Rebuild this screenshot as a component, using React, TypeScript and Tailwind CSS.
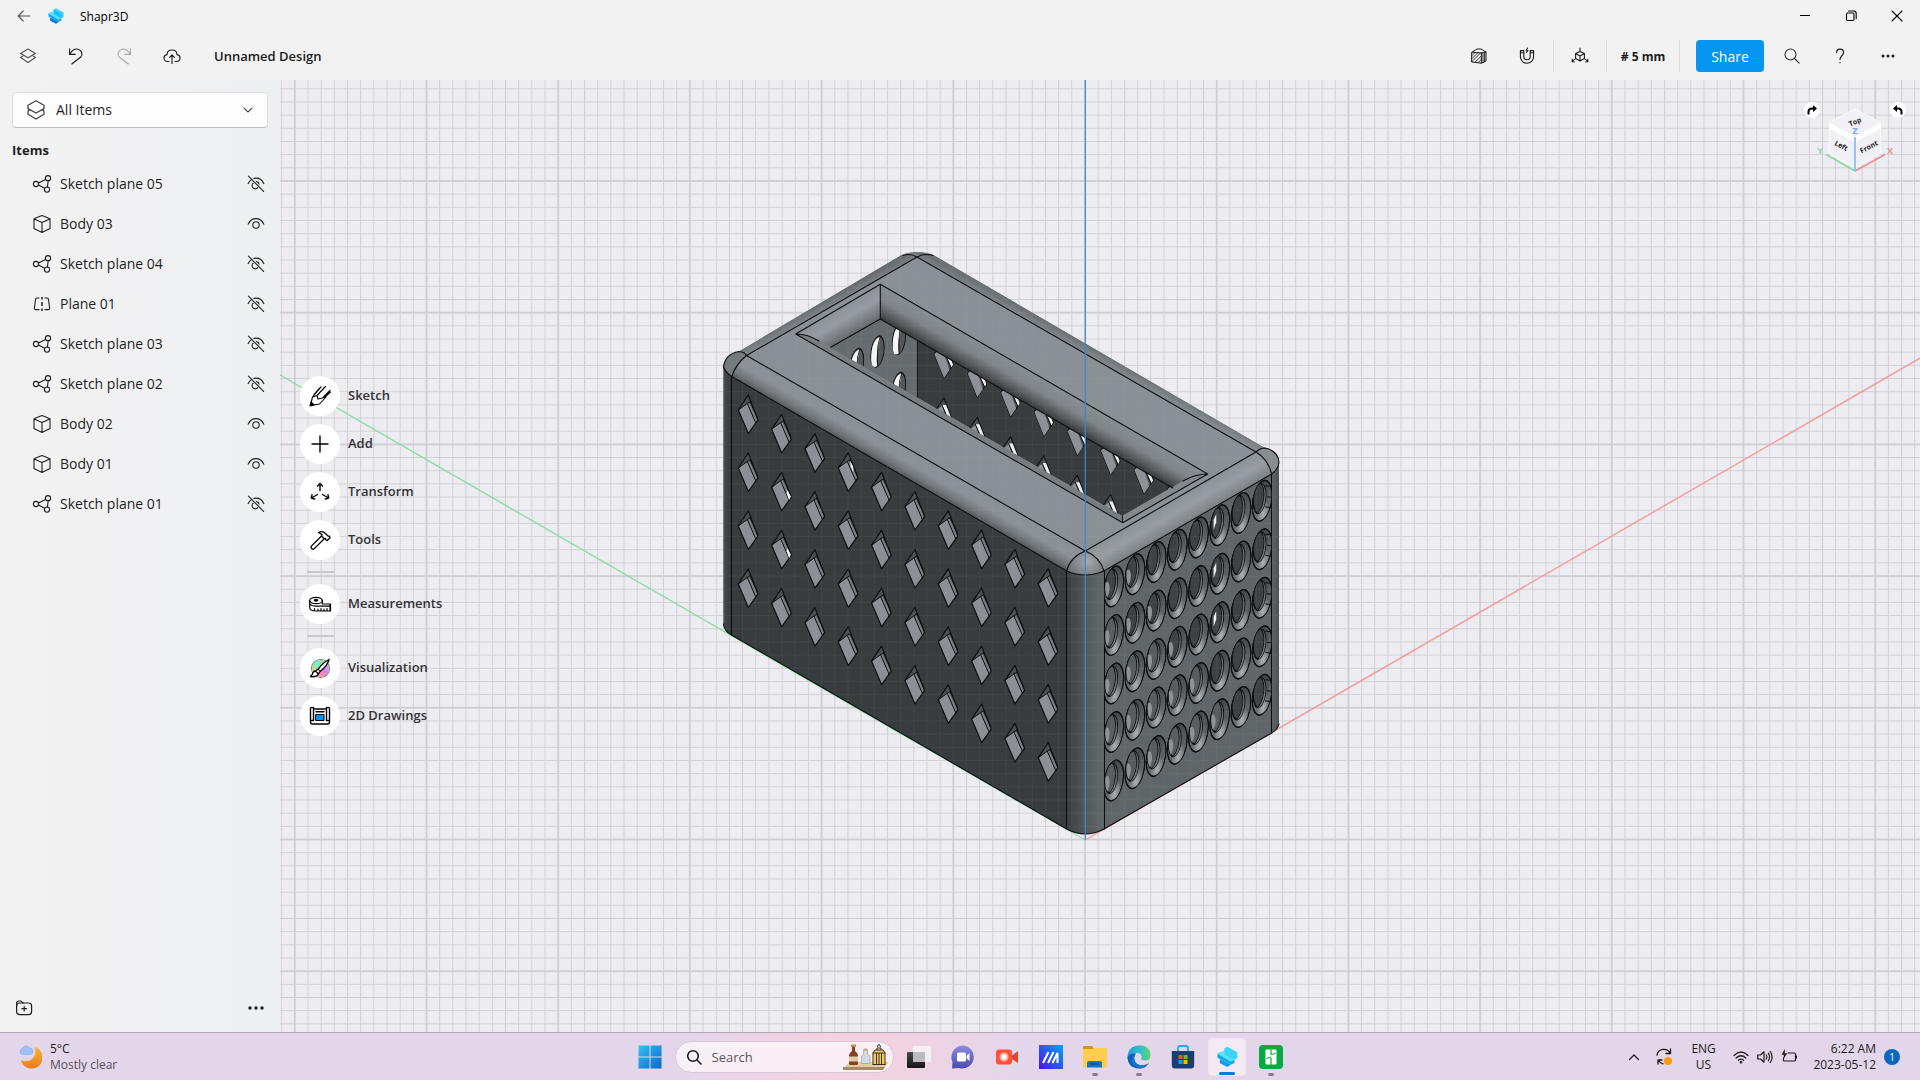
import type { ReactNode } from "react";

type IconProps = { size?: number; children: ReactNode; className?: string; sw?: number };

function Icon({ size = 20, children, className = "", sw = 1.1 }: IconProps) {
  return (
    <svg
      width={size}
      height={size}
      viewBox={`0 0 ${size} ${size}`}
      fill="none"
      stroke="currentColor"
      strokeWidth={sw}
      strokeLinecap="round"
      strokeLinejoin="round"
      className={`shrink-0 ${className}`}
      aria-hidden="true"
    >
      {children}
    </svg>
  );
}

function ShaprLogo({ size }: { size: number }) {
  return (
    <svg width={size} height={size} viewBox="0 0 16 16" aria-hidden="true">
      <path d="M5.6 1.6 8 .2l7.6 4.2v4.4l-2.2 1.4L5.6 6z" fill="#38d6ff" />
      <path d="M5.6 1.6 13.4 6v4.2L5.6 6z" fill="#1cc0fb" />
      <path d="M.4 5.6 3 4.2l10.4 6v2.4L10.6 14 .4 8.6z" fill="#12a9f4" />
      <path d="M3 4.2 5.6 3v3l7.8 4.2-2.8 1.6L.4 5.6z" fill="#5be4ff" />
      <path d="M2.2 9.6 10.6 14 8 15.800l-5.800-3z" fill="#0b74dd" />
    </svg>
  );
}

const SketchPlaneIcon = () => (
  <Icon>
    <circle cx="4" cy="10" r="2.6" />
    <circle cx="16" cy="4.2" r="2.6" />
    <circle cx="15" cy="15.6" r="2.6" />
    <path d="M6.5 9 13.6 5.4M6.5 11l6.1 3.2M16.2 6.8 15.4 13" />
  </Icon>
);

const BodyIcon = () => (
  <Icon>
    <path d="M10 1.6 18 4.8v9.8L10 18.4 2 14.6V4.8zM2.2 5 10 8.4 17.8 5M10 8.4v9.8" />
  </Icon>
);

const PlaneIcon = () => (
  <Icon>
    <path d="M7 4H5.2c-1 0-1.6.6-1.7 1.6L2.4 14c-.1 1 .4 1.6 1.2 1.6H7M13 4h1.800c1 0 1.600.6 1.700 1.600l1.100 8.400c.1 1-.4 1.600-1.200 1.600H13" />
    <path d="M10 3v2.500M10 8v4M10 14.500V17" strokeLinecap="butt" strokeWidth="1.500" />
  </Icon>
);

const EyeIcon = () => (
  <Icon size={18}>
    <path d="M1.200 9.200C2.800 5.600 5.600 3.600 9 3.600s6.200 2 7.800 5.600" />
    <circle cx="9" cy="10" r="3.200" />
  </Icon>
);

const EyeOffIcon = () => (
  <Icon size={18}>
    <path d="M1.200 8.600c.8-1.700 1.800-3 3.200-4M7 3.400c4.400-1 8 1.200 9.800 5.200M6.200 8.200a3.200 3.200 0 1 0 4.600 4.400M9.600 6.600a3.200 3.200 0 0 1 2.500 2.600M1.400 1.200l15.200 15.200" />
  </Icon>
);

const items = [
  { name: "Sketch plane 05", kind: "sketch", visible: false },
  { name: "Body 03", kind: "body", visible: true },
  { name: "Sketch plane 04", kind: "sketch", visible: false },
  { name: "Plane 01", kind: "plane", visible: false },
  { name: "Sketch plane 03", kind: "sketch", visible: false },
  { name: "Sketch plane 02", kind: "sketch", visible: false },
  { name: "Body 02", kind: "body", visible: true },
  { name: "Body 01", kind: "body", visible: true },
  { name: "Sketch plane 01", kind: "sketch", visible: false },
];

function ItemIcon({ kind }: { kind: string }) {
  if (kind === "sketch") return <SketchPlaneIcon />;
  if (kind === "body") return <BodyIcon />;
  return <PlaneIcon />;
}

function TitleBar() {
  return (
    <div className="flex h-8 items-center text-xs text-black">
      <button aria-label="Back" className="flex h-8 w-12 items-center justify-center text-[#555]">
        <Icon size={14}>
          <path d="M1.200 7h11.800M6.200 2 1.200 7l5 5" />
        </Icon>
      </button>
      <ShaprLogo size={16} />
      <span className="ml-4 grow pt-px">Shapr3D</span>
      <button aria-label="Minimize" className="flex h-8 w-[46px] items-center justify-center">
        <Icon size={10} sw={1}>
          <path d="M0 4.500h10" />
        </Icon>
      </button>
      <button aria-label="Restore" className="flex h-8 w-[46px] items-center justify-center">
        <Icon size={12} sw={1.100}>
          <rect x="1.500" y="3" width="7.500" height="7.500" rx="1.200" />
          <path d="M3.600 1h5c1.600 0 2.600 1 2.600 2.600v5" />
        </Icon>
      </button>
      <button aria-label="Close" className="flex h-8 w-[46px] items-center justify-center">
        <Icon size={12}>
          <path d="m1 1 10 10M11 1 1 11" />
        </Icon>
      </button>
    </div>
  );
}

function ToolButton({ label, children, className = "" }: { label: string; children: ReactNode; className?: string }) {
  return (
    <button aria-label={label} className={`flex h-12 w-12 items-center justify-center ${className}`}>
      {children}
    </button>
  );
}

const Divider = () => <div className="mx-0.5 h-8 w-px bg-[#dcdcdc]" />;

function Toolbar() {
  return (
    <div className="flex h-12 items-center pr-2 pl-1 text-[#1b1b1b]">
      <ToolButton label="Items">
        <Icon size={18} className="text-[#555]" sw={1.200}>
          <path d="M9 2 16.400 6.400 9 10.800 1.600 6.400zM3.600 9.200 1.600 10.600 9 15.400l7.400-4.800-2-1.400" />
        </Icon>
      </ToolButton>
      <ToolButton label="Undo">
        <Icon size={18}>
          <path d="M2.600 1.800v5.600h5.600M2.800 7.200C5 3.400 8 1.600 11 2.200c3.600.8 5.200 4.800 2.800 7.800L4.800 17" />
        </Icon>
      </ToolButton>
      <ToolButton label="Redo" className="text-[#a8a8a8]">
        <Icon size={18}>
          <path d="M15.400 1.800v5.600H9.800M15.200 7.200C13 3.400 10 1.600 7 2.200 3.400 3 1.800 7 4.200 10l9 7" />
        </Icon>
      </ToolButton>
      <ToolButton label="Upload">
        <Icon size={18}>
          <path d="M6 14.500H4.600C2.600 14.500 1 13 1 11c0-1.800 1.200-3.200 3-3.400C4.200 4.800 6.400 3 9 3s4.800 1.800 5 4.600c1.800.2 3 1.600 3 3.400 0 2-1.600 3.500-3.600 3.500H12M9 16.500V8.200M6.600 10.400 9 8l2.400 2.400" />
        </Icon>
      </ToolButton>
      <h1 className="ml-[18px] grow pt-0.5 text-[13px] font-semibold">Unnamed Design</h1>
      <ToolButton label="Section view">
        <Icon size={18} sw={1}>
          <path d="M2 5.200 7 2h4l5 3v9l-4.600 2.200L2 15zM2 5.200l9.400.8v10.200M11.400 6 16 5" />
          <path
            d="M2 8.500 5 5.500M2 11.500l6-6M2 14.500l9-9M5 15.200l6.400-6.400M8 15.600l3.400-3.400M13 15.600V6M14.600 14.800V5.600"
            strokeWidth=".9"
          />
        </Icon>
      </ToolButton>
      <ToolButton label="Snapping">
        <Icon size={18}>
          <path d="M2.400 3.600h3.400v6a3.200 3.200 0 0 0 6.400 0v-6h3.400v6a6.600 6.600 0 0 1-13.200 0zM2.400 5.800h3.400M12.200 5.800h3.400M9.600 1 8 3.200h2L8.400 5.400" />
        </Icon>
      </ToolButton>
      <Divider />
      <ToolButton label="Orientation">
        <Icon size={18}>
          <path d="M9 4.400 13.400 6.600v5L9 14l-4.400-2.400v-5zM4.600 6.600 9 9l4.400-2.400M9 9v5M9 4.400V1M4.600 11.600 2 13.600M13.400 11.600l2.600 2M1.200 12.400v2.200l2 .4M16.800 12.400v2.200l-2 .4" />
        </Icon>
      </ToolButton>
      <Divider />
      <button className="w-[68px] pt-0.5 text-xs font-bold">#&nbsp;5&nbsp;mm</button>
      <Divider />
      <button className="mr-1 ml-[14px] h-8 w-[68px] rounded bg-[#0594f0] pt-0.5 text-sm text-white">Share</button>
      <ToolButton label="Search">
        <Icon size={18} className="text-[#333]">
          <circle cx="7.500" cy="7.500" r="5.500" />
          <path d="m11.500 11.500 4.700 4.700" />
        </Icon>
      </ToolButton>
      <ToolButton label="Help">
        <Icon size={18} sw={1.200}>
          <path d="M5.600 5.600C5.600 3.400 7 2.200 9 2.200s3.600 1.300 3.600 3.300c0 1.700-1 2.500-2 3.500s-1.600 1.900-1.600 3.600M9 15.600v.2" />
        </Icon>
      </ToolButton>
      <ToolButton label="More">
        <Icon size={18}>
          <g fill="currentColor" stroke="none">
            <circle cx="4" cy="9" r="1.500" />
            <circle cx="9" cy="9" r="1.500" />
            <circle cx="14" cy="9" r="1.500" />
          </g>
        </Icon>
      </ToolButton>
    </div>
  );
}

function Sidebar() {
  return (
    <aside className="flex w-[280px] shrink-0 flex-col bg-linear-to-r from-[#f2f2f2] to-[#eeeff2] text-[#1f1f1f]">
      <div className="relative mx-3 mt-3 h-9 text-[#444]">
        <select
          aria-label="Item filter"
          className="h-9 w-full appearance-none rounded border border-b-[#bdbdbd] border-[#dedede] bg-[#fdfdfd] pl-[43px] text-sm text-[#1f1f1f]"
        >
          <option>All Items</option>
        </select>
        <div className="pointer-events-none absolute inset-0 flex items-center justify-between pr-[15px] pl-[14px]">
          <Icon size={20} sw={1.300}>
            <path d="M10 .8 18 5.200v3.400L10 13 2 8.600V5.200zM3.600 9.400 2 11.200v3L10 19l8-4.800v-3l-1.600-1.800" />
          </Icon>
          <Icon size={10}>
            <path d="M1 3.200 5 7l4-3.800" />
          </Icon>
        </div>
      </div>
      <h2 className="mt-[10px] px-3 text-[13px] leading-6 font-bold">Items</h2>
      <ul className="mt-0.5">
        {items.map((item) => (
          <li key={item.name} className="flex h-10 items-center pr-[15px] pl-8 text-sm">
            <ItemIcon kind={item.kind} />
            <span className="ml-2 grow">{item.name}</span>
            <button aria-label={item.visible ? `Hide ${item.name}` : `Show ${item.name}`}>
              {item.visible ? <EyeIcon /> : <EyeOffIcon />}
            </button>
          </li>
        ))}
      </ul>
      <div className="mt-auto flex h-12 items-center justify-between px-[15px]">
        <button aria-label="New folder">
          <Icon size={18} sw={1.200}>
            <rect x="1.600" y="4" width="15" height="11.600" rx="3" />
            <path d="M1.600 7V4.600C1.600 3 2.400 2 4 2h1.500c1.500 0 1.500 2 3 2M9.200 7.400v4.600M6.900 9.700h4.600" />
          </Icon>
        </button>
        <button aria-label="More item actions">
          <Icon size={18}>
            <g fill="currentColor" stroke="none">
              <circle cx="3" cy="9" r="1.700" />
              <circle cx="9" cy="9" r="1.700" />
              <circle cx="15" cy="9" r="1.700" />
            </g>
          </Icon>
        </button>
      </div>
    </aside>
  );
}

const range = (n: number) => Array.from({ length: n }, (_, i) => i);

const bodyOutline =
  "M900 256Q905 252.500 917 252Q930 252.500 935 256L1264 447.500Q1279 450 1279 463V725Q1278 729 1271.500 733L1104 829Q1085 839 1066.500 829L731.500 635Q724 631 723.500 624V367Q725 356 739 351.500Z";
const innerOpening = "M830.500 347.300 880.300 319 1172.700 488 1183 481 1122.300 516 821 342Z";

function Model() {
  return (
    <g strokeLinejoin="round" strokeLinecap="round">
      <path d={bodyOutline} fill="#61666a" />

      <path d="M723.500 367 731.700 376.500V635Q724 631 723.500 624Z" fill="url(#cylLeft)" />
      <path d="M731.700 376.500 1066.700 571V829L731.700 635Z" fill="#383c3e" />
      <path d="M1066.700 571Q1085 579 1104 571V829Q1085 839 1066.700 829Z" fill="url(#cylFront)" />
      <path d="M1104 571 1271.700 474V733L1104 829Z" fill="#5f6568" />
      <path d="M1271.700 474 1279 463V725Q1278 729 1271.700 733Z" fill="url(#cylRight)" />

      <path d="M900 256Q905 252.500 917 252Q930 252.500 935 256L1264 447.500 1256 452 917 257Z" fill="url(#filletBack)" />
      <path d="M900 256Q908 253 917 257L746.500 355.500 739 351.500Z" fill="url(#filletBackLeft)" />
      <path d="M917 257 1256 452 1085.300 551 746.500 355.500Z" fill="#899096" />
      <path d="M746.500 355.500 1085.300 551Q1070 557 1066.700 571L731.700 376.500Q736 364 746.500 355.500Z" fill="url(#filletLeft)" />
      <path d="M1085.300 551 1256 452Q1268 459 1271.700 474L1104 571Q1100 557 1085.300 551Z" fill="url(#filletRight)" />
      <path d="M1085.300 551Q1100 557 1104 571Q1085 579 1066.700 571Q1070 557 1085.300 551Z" fill="url(#ballFront)" />
      <path d="M739 351.500Q745 352 746.500 355.500 736 364 731.700 376.500 725 372 723.500 367 725 354 739 351.500Z" fill="#73797d" />
      <path d="M1256 452 1264 448Q1279 451 1279 463 1278 469 1271.700 474 1268 459 1256 452Z" fill="#888d92" />

      <path d={innerOpening} fill="#383c3e" />
      <g clipPath="url(#openingClip)">
        <path d="M820 300H917.500V440H820Z" fill="#656b6e" />
        {[
          [857, 364],
          [877.500, 351.500],
          [899, 339],
          [899, 388],
        ].map(([x, y]) => (
          <g key={`${x}-${y}`} transform={`matrix(.866 -.5 0 1 ${x} ${y})`}>
            <ellipse rx="7.700" ry="15" fill="#51565a" stroke="#0c0d0e" strokeWidth="1.100" />
            <path d="M3-13Q-6-15-7.200 0T0 14.200Q-2 8 0 0T3-13Z" fill="#f5f5f7" />
            <path d="M3-13Q0-7 0 0T0 14.200" fill="none" stroke="#0c0d0e" strokeWidth="1" />
          </g>
        ))}
        <path d="M917.500 335V420" stroke="#17191a" strokeWidth="1.100" />
        {range(2).map((r) =>
          range(8).map((c) => (
            <g key={`${r}-${c}`} transform={`translate(${944 + c * 33.33} ${378 + c * 19.3 + r * 58})`}>
              <path d="M0-38 9.300-13.500 0 0-9.700-24Z" fill="#4b5053" stroke="#0c0d0e" strokeWidth="1.100" />
              <path d="M-9.700-24-2-30 5.500-8 0 0Z" fill="#8b9196" />
              <path d="M-2-31 2-31 9-13.500 7.500-10.500Z" fill="#f0f0f3" />
              <path d="M-2-31 7-10.500" stroke="#0c0d0e" strokeWidth="1" />
            </g>
          ))
        )}
      </g>

      <path d="M880.300 284.300 1207.700 474Q1195 474 1183 481L1172.700 488 880.300 319Z" fill="url(#innerBack)" />
      <path d="M880.300 284.300 795.700 334Q808 334 821 342L830.700 347.300 880.300 319Z" fill="url(#innerLeft)" />
      <path d="M795.700 334Q808 334 821 342L1122.300 516V522.700Z" fill="#777c80" />
      <path d="M1122.300 522.700V516L1183 481Q1195 474 1207.700 474Z" fill="#83888c" />

      <g fill="none" stroke="#0c0d0e" strokeWidth="1.100">
        <path d="M795.700 334 880.300 284.300 1207.700 474 1122.700 522.700ZM880.300 284.300V319M830.700 347.300 880.300 319 1172.700 488M1122.500 516V522.700M795.700 334Q808 334 819 341M1207.700 474Q1195 474 1183 481" />
        <path d="M917 257 1256 452 1085.300 551 746.500 355.500ZM903 255.500Q910 253 917 257 924 253 933 255.500" />
        <path d="M731.700 376.500 1066.700 571Q1085 579 1104 571L1271.700 474M1085.300 551Q1070 557 1066.700 571M1085.300 551Q1100 557 1104 571" />
        <path d="M739 351.500Q745 352 746.500 355.500 736 364 731.700 376.500 725 372 723.500 367 725 354 739 351.500M1256 452Q1260 448 1265 448 1279 451 1279 463 1278 469 1271.700 474 1268 459 1256 452" />
        <path d="M731.500 376.500V635M1066.500 571V829M1104.500 571V829M1271.500 474V733" />
        <path d="M723.500 624Q724 631 731.500 635L1066.700 829Q1085 839 1104 829L1271.700 733Q1278 729 1279 724" />
      </g>

      {range(4).map((r) =>
        range(10).map((c) => (
          <g key={`${r}-${c}`} transform={`translate(${748.300 + c * 33.33} ${395 + c * 19.3 + r * 58})`}>
            <path d="M0 0 9.600 25 0 38.500-10 15Z" fill="#4a4f52" />
            <path d="M-10 15-1 8.500 7.500 28 0 38.500Z" fill="#8b9096" />
            <path d="M1 8 9.600 25 7.500 28-1 8.500Z" fill="#7a8085" />
            <path d="M-10 15-1 8.500 2 6.500M-1 8.500 7.500 28M2 6.500 9 22.500" fill="none" stroke="#0c0d0e" strokeWidth="1" />
            <path d="M0 0 9.600 25 0 38.500-10 15Z" fill="none" stroke="#0c0d0e" strokeWidth="1.200" />
            {(c === 1 && (r === 1 || r === 2)) || (c === 3 && r === 0) ? (
              <path d={c === 3 ? "M2 8 5 14V19L2.500 14Z" : "M6 18 9 24 7.500 28 5 21Z"} fill="#f4f4f6" />
            ) : null}
          </g>
        ))
      )}

      <g clipPath="url(#rightClip)">
        {range(5).map((r) =>
          range(8).map((c) => (
            <g
              key={`${r}-${c}`}
              transform={`matrix(.866 -.5 0 1 ${1113.700 + c * 21.200} ${586.500 - c * 12.250 + r * 48.500})`}
              stroke="#0c0d0e"
              strokeWidth="1.100"
              fill="none"
            >
              <ellipse rx="11.400" ry="19.400" fill="url(#holeBase)" />
              <ellipse rx="11.400" ry="19.400" fill="url(#holeShine)" />
              <ellipse cx="-2.800" cy="-3.600" rx="7.400" ry="14.600" fill="url(#holeWall)" strokeWidth=".9" />
              <path
                d="M-1-18Q3.500-9 1.500 0T-5.500 10Q-10 4-10-4T-5.500-17.500Q-3-19-1-18Z"
                fill={c < 6 && r * 2 + 7 - c > 8 ? "#565c60" : "#3d4245"}
                strokeWidth=".9"
              />
              {c < 6 && r + 4 - c > 2 ? <path d="M-9.600-8Q-6.500-10-5-4T-7.500 7.500Q-10.500 1-9.600-8Z" fill="#8d9297" stroke="none" /> : null}
              {c === 5 && r < 3 ? <path d="M-7-9-4-13-4-5-7 1Z" fill="#f0f0f3" stroke="none" /> : null}
              {c === 7 ? <path d="M4-13 11-9M6-1 11 2M4 8 10 12" /> : null}
            </g>
          ))
        )}
      </g>
      <path d={bodyOutline} fill="url(#modelGrid)" />
    </g>
  );
}

function Scene() {
  return (
    <svg
      className="absolute inset-0 h-full w-full"
      viewBox="280 80 1640 952"
      preserveAspectRatio="xMidYMid slice"
      role="img"
      aria-label="Perforated box model on a construction grid"
    >
      <defs>
        <pattern id="minor" x="1084.500" y="839" width="13.170" height="13.170" patternUnits="userSpaceOnUse">
          <path d="M0 .5H13.170M.5 0V13.170" stroke="#d1d0d5" strokeWidth="1" />
        </pattern>
        <pattern id="major" x="1084" y="838.500" width="131.700" height="131.700" patternUnits="userSpaceOnUse">
          <path d="M0 1H131.700M1 0V131.700" stroke="#cdccd1" strokeWidth="1.400" />
        </pattern>
        <pattern id="modelGrid" x="1084.500" y="839" width="13.170" height="13.170" patternUnits="userSpaceOnUse">
          <path d="M0 .5H13.170M.5 0V13.170" stroke="#c9b8a8" strokeOpacity=".07" strokeWidth="1" />
        </pattern>
        <linearGradient id="cylLeft" x1="723" x2="732" y1="0" y2="0" gradientUnits="userSpaceOnUse">
          <stop stopColor="#4a4f52" />
          <stop offset="1" stopColor="#303436" />
        </linearGradient>
        <linearGradient id="cylFront" x1="1066" x2="1104" y1="0" y2="0" gradientUnits="userSpaceOnUse">
          <stop stopColor="#383c3e" />
          <stop offset=".5" stopColor="#53585b" />
          <stop offset="1" stopColor="#62686b" />
        </linearGradient>
        <linearGradient id="cylRight" x1="1271" x2="1279" y1="0" y2="0" gradientUnits="userSpaceOnUse">
          <stop stopColor="#60666a" />
          <stop offset="1" stopColor="#4c5154" />
        </linearGradient>
        <linearGradient id="filletBack" x1="1100" y1="352" x2="1095" y2="361" gradientUnits="userSpaceOnUse">
          <stop stopColor="#6c7175" />
          <stop offset="1" stopColor="#888e93" />
        </linearGradient>
        <linearGradient id="filletBackLeft" x1="820" y1="303" x2="825" y2="312" gradientUnits="userSpaceOnUse">
          <stop stopColor="#666b6f" />
          <stop offset="1" stopColor="#848a8f" />
        </linearGradient>
        <linearGradient id="filletLeft" x1="746.500" y1="355.500" x2="733.700" y2="377.600" gradientUnits="userSpaceOnUse">
          <stop stopColor="#8a9196" />
          <stop offset=".45" stopColor="#8c9198" />
          <stop offset=".8" stopColor="#6f7478" />
          <stop offset="1" stopColor="#55595c" />
        </linearGradient>
        <linearGradient id="filletRight" x1="1085.300" y1="551" x2="1098" y2="573" gradientUnits="userSpaceOnUse">
          <stop stopColor="#8b9297" />
          <stop offset=".5" stopColor="#989da4" />
          <stop offset="1" stopColor="#7e8387" />
        </linearGradient>
        <radialGradient id="ballFront" cx="1088" cy="561" r="20" gradientUnits="userSpaceOnUse">
          <stop stopColor="#a3a9ad" />
          <stop offset="1" stopColor="#6e7377" />
        </radialGradient>
        <linearGradient id="innerBack" x1="880.300" y1="284.300" x2="865.300" y2="310.300" gradientUnits="userSpaceOnUse">
          <stop stopColor="#888f94" />
          <stop offset=".45" stopColor="#7f8489" />
          <stop offset=".8" stopColor="#54585b" />
          <stop offset="1" stopColor="#37393b" />
        </linearGradient>
        <linearGradient id="innerLeft" x1="795.700" y1="334" x2="811" y2="360" gradientUnits="userSpaceOnUse">
          <stop stopColor="#8c9298" />
          <stop offset=".4" stopColor="#979ca3" />
          <stop offset="1" stopColor="#63686b" />
        </linearGradient>
        <linearGradient id="holeBase" x1="0" y1="0" x2="0" y2="1">
          <stop stopColor="#3f4447" />
          <stop offset=".4" stopColor="#54595c" />
          <stop offset="1" stopColor="#6d7276" />
        </linearGradient>
        <radialGradient id="holeShine" cx=".55" cy=".86" r=".34">
          <stop stopColor="#aeb2b6" />
          <stop offset="1" stopColor="#aeb2b6" stopOpacity="0" />
        </radialGradient>
        <linearGradient id="holeWall" x1="0" y1="0" x2="0" y2="1">
          <stop stopColor="#565b5f" />
          <stop offset="1" stopColor="#74797d" />
        </linearGradient>
        <clipPath id="openingClip">
          <path d={innerOpening} />
        </clipPath>
        <clipPath id="rightClip">
          <path d="M1104 571 1271.700 474V733L1104 829Z" />
        </clipPath>
      </defs>
      <path d="M0 0H2400V1400H0Z" fill="#edecf1" />
      <path d="M0 0H2400V1400H0Z" fill="url(#minor)" />
      <path d="M0 0H2400V1400H0Z" fill="url(#major)" />
      <path d="M1085.300 840 0 213.400" stroke="#8fdba5" strokeWidth="1.400" />
      <path d="M1085.300 840 2400 81" stroke="#f59a98" strokeWidth="1.400" />
      <Model />
      <path d="M1085.300 0V840" stroke="#3c86d0" strokeWidth="1.200" />
    </svg>
  );
}

const tools: { label: string; icon: ReactNode; dividerAfter?: boolean }[] = [
  {
    label: "Sketch",
    icon: (
      <Icon size={24}>
        <path d="M2.500 21.500 4.500 13 13 2.800M9 11.500 17.500 2.500M14.500 14 22 6.500M4.500 13 9 11.500 10 15l4.500-1M14.500 14l3-1.500L22.500 8M2.500 21.500 11.500 20l6.500-7M6 10.500 11.500 4" />
        <path d="m2 22 1-4 3 3z" fill="currentColor" />
      </Icon>
    ),
  },
  {
    label: "Add",
    icon: (
      <Icon size={24} sw={1.400}>
        <path d="M12 4v16M4 12h16" />
      </Icon>
    ),
  },
  {
    label: "Transform",
    icon: (
      <Icon size={24} sw={1.400}>
        <path d="M12 10.500V3.500M9.500 6 12 3.500 14.500 6M9.500 14.500l-6 3.500M4 14.800 3.300 18l3.300 1M14.500 14.500l6 3.500M20 14.800l.7 3.200-3.300 1" />
      </Icon>
    ),
  },
  {
    label: "Tools",
    dividerAfter: true,
    icon: (
      <Icon size={24} sw={1.300}>
        <path d="M13.500 8 3.600 17.900a1.900 1.900 0 0 0 2.700 2.700L16.200 10.700M10.500 4.500C13 3.200 15.500 3.400 17.500 5.500L20 8l1.500.2.500 1.500-2.800 2.800-1.400-.6-.3-1.500L16.200 10.700 13.500 8 14 6.500z" />
      </Icon>
    ),
  },
  {
    label: "Measurements",
    dividerAfter: true,
    icon: (
      <Icon size={24} sw={1.200}>
        <ellipse cx="8" cy="8.500" rx="6.300" ry="3.200" />
        <ellipse cx="8" cy="8.300" rx="1.800" ry=".8" fill="currentColor" />
        <path d="M1.700 8.500v7C1.700 17.500 4 19 8 19h14.500v-7H14.300V8.500M2 12c1 1.500 3.500 2.200 6 2.200h14M22 12v7M6.500 19v-2.500M10 19v-2M13 19v-2.500M16 19v-2M19 19v-2.500" />
      </Icon>
    ),
  },
  {
    label: "Visualization",
    icon: (
      <div className="relative grid size-6 place-items-center">
        <div className="size-[17px] rounded-full bg-[conic-gradient(from_0deg,#8ee08a,#c9b4f5,#e27df0,#ff8f9a,#f7c46a,#7ff0b0,#7cf0d0)] ring-1 ring-[#777]" />
        <div className="absolute inset-0">
          <Icon size={24} sw={1.300}>
            <path d="M21 3.500C17 5.500 12.500 10 10 13.500l2 2C15.500 13 20 8 21 3.500z" fill="#fff" />
            <path d="M9.500 13.500 7.500 15l3 3 1.500-2.500M7.500 15c-2.500.2-3 2-3.200 3.500L2.500 20.500c3 .5 6.500.3 8-2.500z" fill="#fff" />
          </Icon>
        </div>
      </div>
    ),
  },
  {
    label: "2D Drawings",
    icon: (
      <Icon size={24} sw={1.400}>
        <path d="M5.500 3.500V16.500M18.500 3.500V16.500M5.500 5h13M2.500 4.500C2.500 3 5.500 3 5.500 4.500M18.500 4.500c0-1.500 3-1.500 3 0V18c0 1.500-.8 2-2 2h-15c-1.200 0-2-.5-2-2V4.500M3 16.500h2.500M18.500 16.500H21M8 7.800h8" />
        <rect x="8" y="10.500" width="8" height="6" fill="#0a95f5" strokeWidth="1" />
      </Icon>
    ),
  },
];

function ToolMenu() {
  return (
    <nav className="relative flex h-full w-max flex-col justify-center gap-2 pl-5 text-[13px] font-semibold text-[#333336]">
      {tools.map((t) => (
        <div key={t.label} className="flex flex-col gap-2">
          <button className="flex items-center gap-2 text-left">
            <span className="flex size-10 items-center justify-center rounded-full bg-white text-black">{t.icon}</span>
            {t.label}
          </button>
          {t.dividerAfter ? (
            <div className="flex h-2 w-10 items-center justify-center">
              <div className="h-[2px] w-[27px] bg-[#c8c7cb]" />
            </div>
          ) : null}
        </div>
      ))}
    </nav>
  );
}

function ViewCube() {
  return (
    <div className="absolute top-[22px] right-[14px] flex h-[76px] w-[102px] items-start justify-between">
      <svg viewBox="0 0 102 76" className="absolute inset-0" fontFamily="Open Sans, sans-serif" fontWeight="700">
        <path d="M51 7 76.500 20.500 77 51 51 66 25 51 25.500 20.500Z" fill="#f1f0f5" stroke="#fbfbfd" strokeWidth="1" strokeLinejoin="round" />
        <path d="M25.500 21 51 34.500 76.500 21V27L51 40 25.500 27Z" fill="#fff" />
        <path d="M50 36H52V66H50Z" fill="#fff" />
        <g fontSize="7" fill="#1b1b1d" textAnchor="middle">
          <text transform="translate(52 22) rotate(-22)">Top</text>
          <text transform="translate(36 46) rotate(28)">Left</text>
          <text transform="translate(66 47) rotate(-28)">Front</text>
        </g>
        <g strokeWidth="1.700" fill="none">
          <path d="M51 69 22 52.500" stroke="#8bd9a0" />
          <path d="M51 69 81 52.500" stroke="#f08f8d" />
          <path d="M51 69V35" stroke="#85b9f5" />
        </g>
        <g fontSize="9" textAnchor="middle">
          <text x="51" y="32" fill="#6fa8ef">Z</text>
          <text x="16" y="52" fill="#8bd9a0">Y</text>
          <text x="86" y="52" fill="#f08f8d">X</text>
        </g>
      </svg>
      {["Rotate right", "Rotate left"].map((label, i) => (
        <button key={label} aria-label={label} className="relative flex size-4 items-center justify-center rounded-full bg-white text-black">
          <svg width="12" height="12" viewBox="0 0 12 12" className={i === 1 ? "-scale-x-100" : ""}>
            <path d="M2.500 10.500V8Q2.500 4.500 6 4.500H8" fill="none" stroke="currentColor" strokeWidth="2" />
            <path d="M7 1 11 4.500 7 8Z" fill="currentColor" />
          </svg>
        </button>
      ))}
    </div>
  );
}

function TaskIcon({ label, children, active, running }: { label: string; children: ReactNode; active?: boolean; running?: boolean }) {
  return (
    <button
      aria-label={label}
      className={`relative mx-[3px] flex h-[38px] w-[38px] items-center justify-center rounded ${active ? "border border-[#efe5f2] bg-[#f3eaf6]" : ""}`}
    >
      <svg width="24" height="24" viewBox="0 0 24 24" aria-hidden="true">
        {children}
      </svg>
      {active ? <span className="absolute bottom-0 h-[3px] w-4 rounded-full bg-[#0a78d4]" /> : null}
      {running ? <span className="absolute bottom-0 h-[3px] w-1.5 rounded-full bg-[#857d8a]" /> : null}
    </button>
  );
}

function Taskbar() {
  return (
    <footer className="grid h-12 shrink-0 grid-cols-[1fr_auto_1fr] items-center border-t border-[#b0a6b6] bg-[linear-gradient(100deg,#e4d6ea_36%,#f4d2df_43%,#f2d2e0_46%,#e4d6ea_53%)] text-xs leading-4 text-[#1b1b1b]">
      <button className="flex items-center gap-2 pl-[18px] text-left">
        <svg width="24" height="24" viewBox="0 0 24 24" aria-hidden="true">
          <defs>
            <linearGradient id="moon" x1="0" y1="0" x2="0" y2="1">
              <stop stopColor="#f8b629" />
              <stop offset="1" stopColor="#f07a1c" />
            </linearGradient>
          </defs>
          <path d="M16.500 2A11 11 0 1 1 3 15.500Q11 18 15 13T16.500 2Z" fill="url(#moon)" />
          <path d="M4 9.500a3.200 3.200 0 0 1 .3-6A4 4 0 0 1 11.500 3a3.300 3.300 0 0 1 1 6.500Z" fill="#9fc0f5" stroke="#7ea6e8" strokeWidth=".6" />
        </svg>
        <span>
          5°C
          <span className="block text-[#57505c]">Mostly clear</span>
        </span>
      </button>

      <div className="flex items-center">
        <TaskIcon label="Start">
          <defs>
            <linearGradient id="win" x1="0" y1="0" x2="1" y2="1">
              <stop stopColor="#35c1f1" />
              <stop offset="1" stopColor="#0a66cc" />
            </linearGradient>
          </defs>
          <path d="M.5.500H11.500V11.500H.5ZM12.500.500H23.500V11.500H12.500ZM.5 12.500H11.500V23.500H.5ZM12.500 12.500H23.500V23.500H12.500Z" fill="url(#win)" />
        </TaskIcon>
        <label className="mx-[3px] flex h-8 w-[219px] items-center overflow-hidden rounded-full border border-[#d9c8da] bg-[#f9f0f6] pr-1 pl-2.5">
          <Icon size={16} sw={1.600}>
            <circle cx="7" cy="7" r="5.300" />
            <path d="m11 11 4 4" />
          </Icon>
          <input
            aria-label="Search"
            placeholder="Search"
            className="ml-2.5 w-0 grow bg-transparent text-[13px] outline-none placeholder:text-[#5c5560]"
          />
          <svg width="46" height="28" viewBox="0 0 46 28" aria-hidden="true">
            <path d="M0 24H2L6 19H46L42 24Z" fill="#e0cda6" />
            <path d="M0 24H42L40 27H0Z" fill="#a68c66" />
            <path d="M9 2.500H12V8Q15 10 15 12.500V20.500Q15 22 13.500 22H7.500Q6 22 6 20.500V12.500Q6 10 9 8Z" fill="#8c3f1f" />
            <path d="M6 13.500H15V18.500H6Z" fill="#e2cba8" />
            <path d="M8 1.500H13V4H8Z" fill="#c98a4a" />
            <path d="M20.500 7H24.500V11Q27 12 27 14.500V20.500H18.500V14.500Q18.500 12 20.500 11Z" fill="#d3d8e2" stroke="#9aa2b3" strokeWidth=".7" />
            <path d="M20.500 5.500H24.500V8H20.500Z" fill="#cfa878" />
            <path d="M32 7H40L42 10V21.500H30V10Z" fill="#f3cd5e" stroke="#3a3020" strokeWidth="1" />
            <path d="M33.500 10V21M36 10V21M38.500 10V21M29.500 10H42.500M29.500 21.500H42.500M34 7V5H38V7M34.500 4Q36-1.500 37.500 4" fill="none" stroke="#3a3020" strokeWidth="1" />
          </svg>
        </label>
        <TaskIcon label="Task view">
          <defs>
            <linearGradient id="tvDark" x1="0" y1="0" x2="0" y2="1">
              <stop stopColor="#4a4a4a" />
              <stop offset="1" stopColor="#151515" />
            </linearGradient>
          </defs>
          <rect x="0" y="7" width="18" height="16" rx="1" fill="url(#tvDark)" />
          <rect x="6" y="1" width="18" height="16" rx="1" fill="#f2f0f3" />
          <path d="M6 7H18V17H7Q6 17 6 16Z" fill="#bcbbbf" />
        </TaskIcon>
        <TaskIcon label="Chat">
          <defs>
            <linearGradient id="chat" x1="0" y1="0" x2="0" y2="1">
              <stop stopColor="#8a8ddb" />
              <stop offset="1" stopColor="#4a4bb5" />
            </linearGradient>
          </defs>
          <path d="M12 .5A11.500 11.500 0 1 1 8 23L1 23.500 1.500 17A11.500 11.500 0 0 1 12 .5Z" fill="url(#chat)" />
          <rect x="6" y="7.500" width="9" height="9" rx="1.500" fill="#fff" />
          <path d="M15.500 11 18.500 8V16L15.500 13Z" fill="#fff" />
        </TaskIcon>
        <TaskIcon label="Recorder">
          <rect x="1" y="4.500" width="16" height="15" rx="3" fill="#ff5038" />
          <path d="M17 10.500 23 6V18L17 14Z" fill="#e8402a" />
          <circle cx="9" cy="12" r="4.500" fill="#ffb1a3" />
          <circle cx="9" cy="12" r="2.500" fill="#fff" />
        </TaskIcon>
        <TaskIcon label="MyASUS">
          <defs>
            <linearGradient id="asus" x1="1" y1="0" x2="0" y2="1">
              <stop stopColor="#06a4f0" />
              <stop offset="1" stopColor="#4a10f0" />
            </linearGradient>
          </defs>
          <rect width="24" height="24" fill="url(#asus)" />
          <path d="M4 18 9.500 7M9 18 14.500 7M13.500 18 18.500 8V18" fill="none" stroke="#fff" strokeWidth="2" />
        </TaskIcon>
        <TaskIcon label="File Explorer" running>
          <path d="M0 1H9L11 4H0Z" fill="#d9930c" />
          <path d="M0 4H10L12 3H24V21Q24 22.500 22.500 22.500H1.500Q0 22.500 0 21Z" fill="#fbcf4b" />
          <path d="M4 17.500Q4 16 6 16H17Q19 16 19 17.500V22.500H4Z" fill="#1273c9" />
          <path d="M7 19H16" stroke="#0b4f94" strokeWidth="1.500" />
        </TaskIcon>
        <TaskIcon label="Edge" running>
          <defs>
            <linearGradient id="edge" x1="0" y1="0" x2="1" y2="0">
              <stop stopColor="#1a9ee0" />
              <stop offset=".6" stopColor="#35c3c8" />
              <stop offset="1" stopColor="#5ed65a" />
            </linearGradient>
          </defs>
          <path d="M.5 12Q1 1 12 .5T23.500 10Q23.500 15.500 18 15.500 14 15.500 14 13.800 15.500 12 14 9.500 11.500 7 7 8 2 9.500.5 14Z" fill="url(#edge)" />
          <path d="M.5 12Q4 7 9 8.500 6 12 8 16.500T17 20Q20 20 22 18 18.500 23.500 12 23.500 1 23 .5 12Z" fill="#0f5fb5" />
          <path d="M9 8.500Q6 12 8 16.500T17 20Q20 20 22 18 19 23 13 23.500 5 21 4.500 15 5 10 9 8.500Z" fill="#1379cf" />
        </TaskIcon>
        <TaskIcon label="Microsoft Store">
          <path d="M7 7V3Q7 1 9 1H15Q17 1 17 3V7" fill="none" stroke="#28a5e8" strokeWidth="1.800" />
          <path d="M.8 6H23.200V20Q23.200 23.500 20 23.500H4Q.8 23.500.8 20Z" fill="#173e70" />
          <rect x="7.500" y="10" width="4" height="4" fill="#f25022" />
          <rect x="12.500" y="10" width="4" height="4" fill="#7fba00" />
          <rect x="7.500" y="15" width="4" height="4" fill="#00a4ef" />
          <rect x="12.500" y="15" width="4" height="4" fill="#ffb900" />
        </TaskIcon>
        <TaskIcon label="Shapr3D" active>
          <g transform="translate(2 1.500) scale(1.300)">
            <path d="M5.600 1.600 8 .2l7.600 4.200v4.400l-2.200 1.400L5.600 6z" fill="#38d6ff" />
            <path d="M.4 5.600 3 4.200l10.400 6v2.400L10.600 14 .4 8.600z" fill="#12a9f4" />
            <path d="M3 4.200 5.600 3v3l7.800 4.200-2.800 1.600L.4 5.600z" fill="#5be4ff" />
            <path d="M2.200 9.600 10.600 14 8 15.800l-5.800-3z" fill="#0b9ff0" />
          </g>
        </TaskIcon>
        <TaskIcon label="Planner" running>
          <rect width="24" height="24" rx="4" fill="#06ac41" />
          <rect x="6.500" y="4.500" width="11" height="15" rx="1" fill="#fff" />
          <path d="M12 4V9.500M12 13V20M7.500 13.500 12 12M12 9.500 16.500 8.500" stroke="#06ac41" strokeWidth="1.200" />
        </TaskIcon>
      </div>

      <div className="flex items-center justify-end pr-5">
        <button aria-label="Show hidden icons" className="mr-[14px]">
          <Icon size={12} sw={1.300}>
            <path d="m1.500 8.500 4.500-4.500 4.500 4.500" />
          </Icon>
        </button>
        <button aria-label="Updates" className="mr-[17px]">
          <Icon size={20} sw={1.300}>
            <path d="M3 8A7 7 0 0 1 16 6M16.500 2v4.500H12M4 17v-4h4M4.500 13.500Q6 16 9 16.800" />
            <circle cx="14" cy="14" r="4" fill="#ff9a0a" stroke="none" />
          </Icon>
        </button>
        <button className="mr-[18px] w-6 text-center">
          ENG
          <br />
          US
        </button>
        <button aria-label="Network, volume, battery" className="mr-4 flex items-center gap-2">
          <Icon size={16} sw={1.200}>
            <path d="M1 6.500Q8-.5 15 6.500M3.200 9Q8 4.500 12.800 9M5.400 11.300Q8 9 10.600 11.300" />
            <circle cx="8" cy="13.200" r="1.200" fill="currentColor" stroke="none" />
          </Icon>
          <Icon size={16} sw={1.200}>
            <path d="M.7 6h2.800L7 2.800v10.400L3.500 10H.7zM9.200 6Q10.500 8 9.200 10M11.300 4.200Q13.800 8 11.300 11.800M13.300 2.500Q17 8 13.300 13.500" />
          </Icon>
          <Icon size={16} sw={1.200}>
            <path d="M7 4h6.500q1 0 1 1v6q0 1-1 1H3.500q-1 0-1-1V9M15.600 7v2" />
            <path d="M3.500 1 1 5.500h2.200L2.800 9 5.800 4.500H3.600z" fill="currentColor" strokeWidth=".5" />
          </Icon>
        </button>
        <button className="mr-2 text-right">
          6:22 AM
          <br />
          2023-05-12
        </button>
        <button aria-label="1 notification" className="flex size-4 items-center justify-center rounded-full bg-[#0a67c0] text-[10px] text-white">
          1
        </button>
      </div>
    </footer>
  );
}

export default function App() {
  return (
    <div className="flex h-screen flex-col overflow-hidden bg-[#f2f2f2] font-['Open_Sans','Noto_Sans',sans-serif]">
      <header>
        <TitleBar />
        <Toolbar />
      </header>
      <div className="flex min-h-0 grow">
        <Sidebar />
        <main className="relative min-w-0 grow overflow-hidden">
          <Scene />
          <ToolMenu />
          <ViewCube />
        </main>
      </div>
      <Taskbar />
    </div>
  );
}
